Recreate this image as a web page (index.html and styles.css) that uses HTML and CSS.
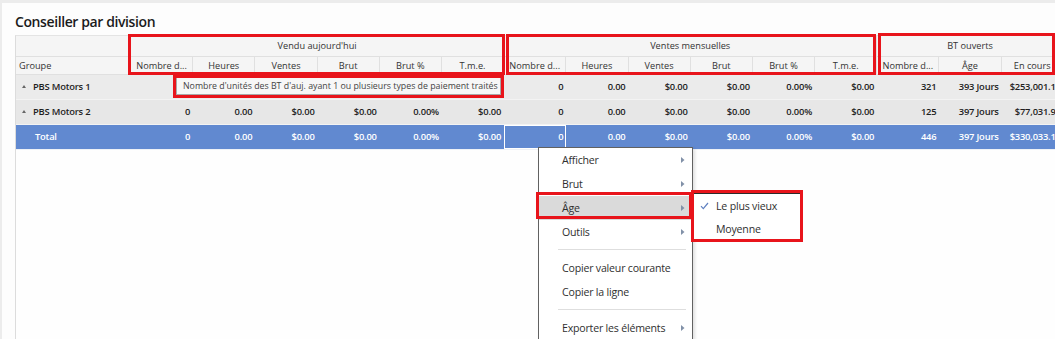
FILE: index.html
```html
<!DOCTYPE html>
<html lang="fr">
<head>
<meta charset="utf-8">
<title>Conseiller par division</title>
<link rel="stylesheet" href="styles.css">
</head>
<body>
<div class="panel">
  <h1 class="title">Conseiller par division</h1>
  <div class="grid">
    <div class="hrow hrow1">
      <div class="hc"></div>
      <div class="hc span6">Vendu aujourd'hui</div>
      <div class="hc span6">Ventes mensuelles</div>
      <div class="hc span3">BT ouverts</div>
    </div>
    <div class="hrow hrow2">
      <div class="hc left">Groupe</div>
      <div class="hc">Nombre d...</div>
      <div class="hc">Heures</div>
      <div class="hc">Ventes</div>
      <div class="hc">Brut</div>
      <div class="hc">Brut %</div>
      <div class="hc">T.m.e.</div>
      <div class="hc">Nombre d...</div>
      <div class="hc">Heures</div>
      <div class="hc">Ventes</div>
      <div class="hc">Brut</div>
      <div class="hc">Brut %</div>
      <div class="hc">T.m.e.</div>
      <div class="hc">Nombre d...</div>
      <div class="hc">Âge</div>
      <div class="hc">En cours</div>
    </div>
    <div class="drow r1">
      <div class="gc"><span class="tri"></span>PBS Motors 1</div>
      <div class="c"></div><div class="c"></div><div class="c"></div><div class="c"></div><div class="c"></div><div class="c"></div>
      <div class="c">0</div><div class="c">0.00</div><div class="c">$0.00</div><div class="c">$0.00</div><div class="c">0.00%</div><div class="c">$0.00</div>
      <div class="c">321</div><div class="c">393 Jours</div><div class="c">$253,001.17</div>
    </div>
    <div class="drow r2">
      <div class="gc"><span class="tri"></span>PBS Motors 2</div>
      <div class="c">0</div><div class="c">0.00</div><div class="c">$0.00</div><div class="c">$0.00</div><div class="c">0.00%</div><div class="c">$0.00</div>
      <div class="c">0</div><div class="c">0.00</div><div class="c">$0.00</div><div class="c">$0.00</div><div class="c">0.00%</div><div class="c">$0.00</div>
      <div class="c">125</div><div class="c">397 Jours</div><div class="c">$77,031.94</div>
    </div>
    <div class="drow total">
      <div class="gc totlabel">Total</div>
      <div class="c">0</div><div class="c">0.00</div><div class="c">$0.00</div><div class="c">$0.00</div><div class="c">0.00%</div><div class="c">$0.00</div>
      <div class="c sel">0</div><div class="c">0.00</div><div class="c">$0.00</div><div class="c">$0.00</div><div class="c">0.00%</div><div class="c">$0.00</div>
      <div class="c">446</div><div class="c">397 Jours</div><div class="c">$330,033.11</div>
    </div>
  </div>
</div>

<div class="tip">Nombre d'unités des BT d'auj. ayant 1 ou plusieurs types de paiement traités</div>

<div class="menu">
  <div class="item">Afficher<svg class="arr" width="4" height="6" viewBox="0 0 4 6"><polygon points="0,0 3.5,3 0,6"/></svg></div>
  <div class="item">Brut<svg class="arr" width="4" height="6" viewBox="0 0 4 6"><polygon points="0,0 3.5,3 0,6"/></svg></div>
  <div class="item hot">Âge<svg class="arr" width="4" height="6" viewBox="0 0 4 6"><polygon points="0,0 3.5,3 0,6"/></svg></div>
  <div class="item">Outils<svg class="arr" width="4" height="6" viewBox="0 0 4 6"><polygon points="0,0 3.5,3 0,6"/></svg></div>
  <div class="sep"></div>
  <div class="item">Copier valeur courante</div>
  <div class="item">Copier la ligne</div>
  <div class="sep"></div>
  <div class="item">Exporter les éléments<svg class="arr" width="4" height="6" viewBox="0 0 4 6"><polygon points="0,0 3.5,3 0,6"/></svg></div>
</div>

<div class="submenu">
  <div class="sitem"><svg class="chk" width="9" height="8" viewBox="0 0 9 8"><path d="M1 4.2 L3.3 6.6 L8 1"/></svg>Le plus vieux</div>
  <div class="sitem">Moyenne</div>
</div>

<div class="mark m1"></div>
<div class="mark m2"></div>
<div class="mark m3"></div>
<div class="mark m4"></div>
<div class="mark m5"></div>
<div class="mark m6"></div>
</body>
</html>
```

FILE: styles.css
```css
html, body {
  margin: 0;
  height: 100%;
  overflow: hidden;
}
body {
  background: #ececec;
  font-family: "Open Sans", "Noto Sans", sans-serif;
  color: #222;
  position: relative;
}
.panel {
  margin: 3px 0 0 2px;
  height: 336px;
  background: #fdfdfd;
  padding-left: 13px;
  overflow: hidden;
}
.title {
  margin: 0 0 3px 0;
  padding-top: 9px;
  font-size: 14px;
  font-weight: 600;
  letter-spacing: -0.4px;
  line-height: 20px;
  color: #1b1b1b;
}
.grid {
  width: max-content;
  min-height: 400px;
  border-left: 1px solid #dcdcdc;
  border-top: 1px solid #e4e4e4;
  background: #fefefe;
}
.hrow, .drow {
  display: grid;
  grid-template-columns: 115px repeat(15, 62.2px);
}
.hrow {
  background: #f5f5f5;
  font-size: 9.2px;
  color: #333;
}
.hc {
  box-sizing: border-box;
  border-right: 1px solid #e0e0e0;
  border-bottom: 1px solid #e0e0e0;
  text-align: center;
  white-space: nowrap;
  overflow: hidden;
}
.hrow1 .hc { height: 21px; line-height: 20px; }
.hrow2 .hc { height: 18px; line-height: 17px; }
.hc.left { text-align: left; padding-left: 3px; }
.span6 { grid-column: span 6; }
.span3 { grid-column: span 3; }

.drow {
  height: 25px;
  box-sizing: border-box;
  border-bottom: 1px solid #f3f3f3;
  font-size: 9.4px;
  font-weight: 600;
  letter-spacing: -0.2px;
  line-height: 24px;
  color: #1e1e1e;
}
.r1 { background: #ebebeb; }
.r2 { background: #e7e7e7; }
.total { background: #6189d0; color: #fff; border-bottom-color: #eef1f6; }
.c {
  text-align: right;
  padding-right: 3px;
  white-space: nowrap;
  overflow: hidden;
  box-sizing: border-box;
}
.sel { box-shadow: inset 0 0 0 1px #fff; }
.gc {
  display: flex;
  align-items: center;
  padding-left: 6px;
  white-space: nowrap;
}
.totlabel { padding-left: 19px; }
.tri {
  width: 0;
  height: 0;
  border-left: 2.5px solid transparent;
  border-right: 2.5px solid transparent;
  border-bottom: 3px solid #666;
  margin-right: 7px;
  margin-top: -1px;
}

.tip {
  position: absolute;
  left: 176px;
  top: 77px;
  width: 325px;
  height: 18px;
  box-sizing: border-box;
  border: 1px solid #a8a8a8;
  background: #f7f7f7;
  font-size: 8.8px;
  line-height: 16px;
  color: #444;
  padding-left: 6px;
  white-space: nowrap;
  overflow: hidden;
}

.menu {
  position: absolute;
  left: 538px;
  top: 147px;
  width: 155px;
  height: 210px;
  box-sizing: border-box;
  border: 1px solid #616161;
  background: #fff;
  box-shadow: 2px 2px 3px rgba(0,0,0,0.12);
  font-size: 10.6px;
  letter-spacing: -0.2px;
  color: #2f2f2f;
}
.item {
  position: relative;
  height: 24px;
  line-height: 24px;
  padding-left: 23px;
  white-space: nowrap;
}
.item.hot { background: #dadada; }
.arr {
  position: absolute;
  right: 7px;
  top: 9px;
  fill: #8191a8;
}
.sep {
  height: 12px;
  position: relative;
}
.sep::after {
  content: "";
  position: absolute;
  left: 19px;
  right: 6px;
  top: 5px;
  border-top: 1px solid #dedede;
}

.submenu {
  position: absolute;
  left: 693px;
  top: 193px;
  width: 108px;
  height: 47px;
  box-sizing: border-box;
  border: 1px solid #2b2b2b;
  background: #fff;
  padding-top: 1px;
  font-size: 10.6px;
  letter-spacing: -0.2px;
  color: #2f2f2f;
}
.sitem {
  position: relative;
  height: 23px;
  line-height: 22px;
  padding-left: 22px;
  white-space: nowrap;
}
.chk {
  position: absolute;
  left: 6px;
  top: 7px;
  fill: none;
  stroke: #5f80c0;
  stroke-width: 1.2;
}

.mark {
  position: absolute;
  box-sizing: border-box;
  border: 3px solid #e8141b;
}
.m1 { left: 128px; top: 34px; width: 377px; height: 41px; }
.m2 { left: 506px; top: 34px; width: 370px; height: 41px; }
.m3 { left: 878px; top: 33px; width: 177px; height: 42px; }
.m4 { left: 173px; top: 75px; width: 331px; height: 23px; }
.m5 { left: 536px; top: 192px; width: 156px; height: 27px; }
.m6 { left: 691px; top: 190px; width: 112px; height: 52px; }
```
